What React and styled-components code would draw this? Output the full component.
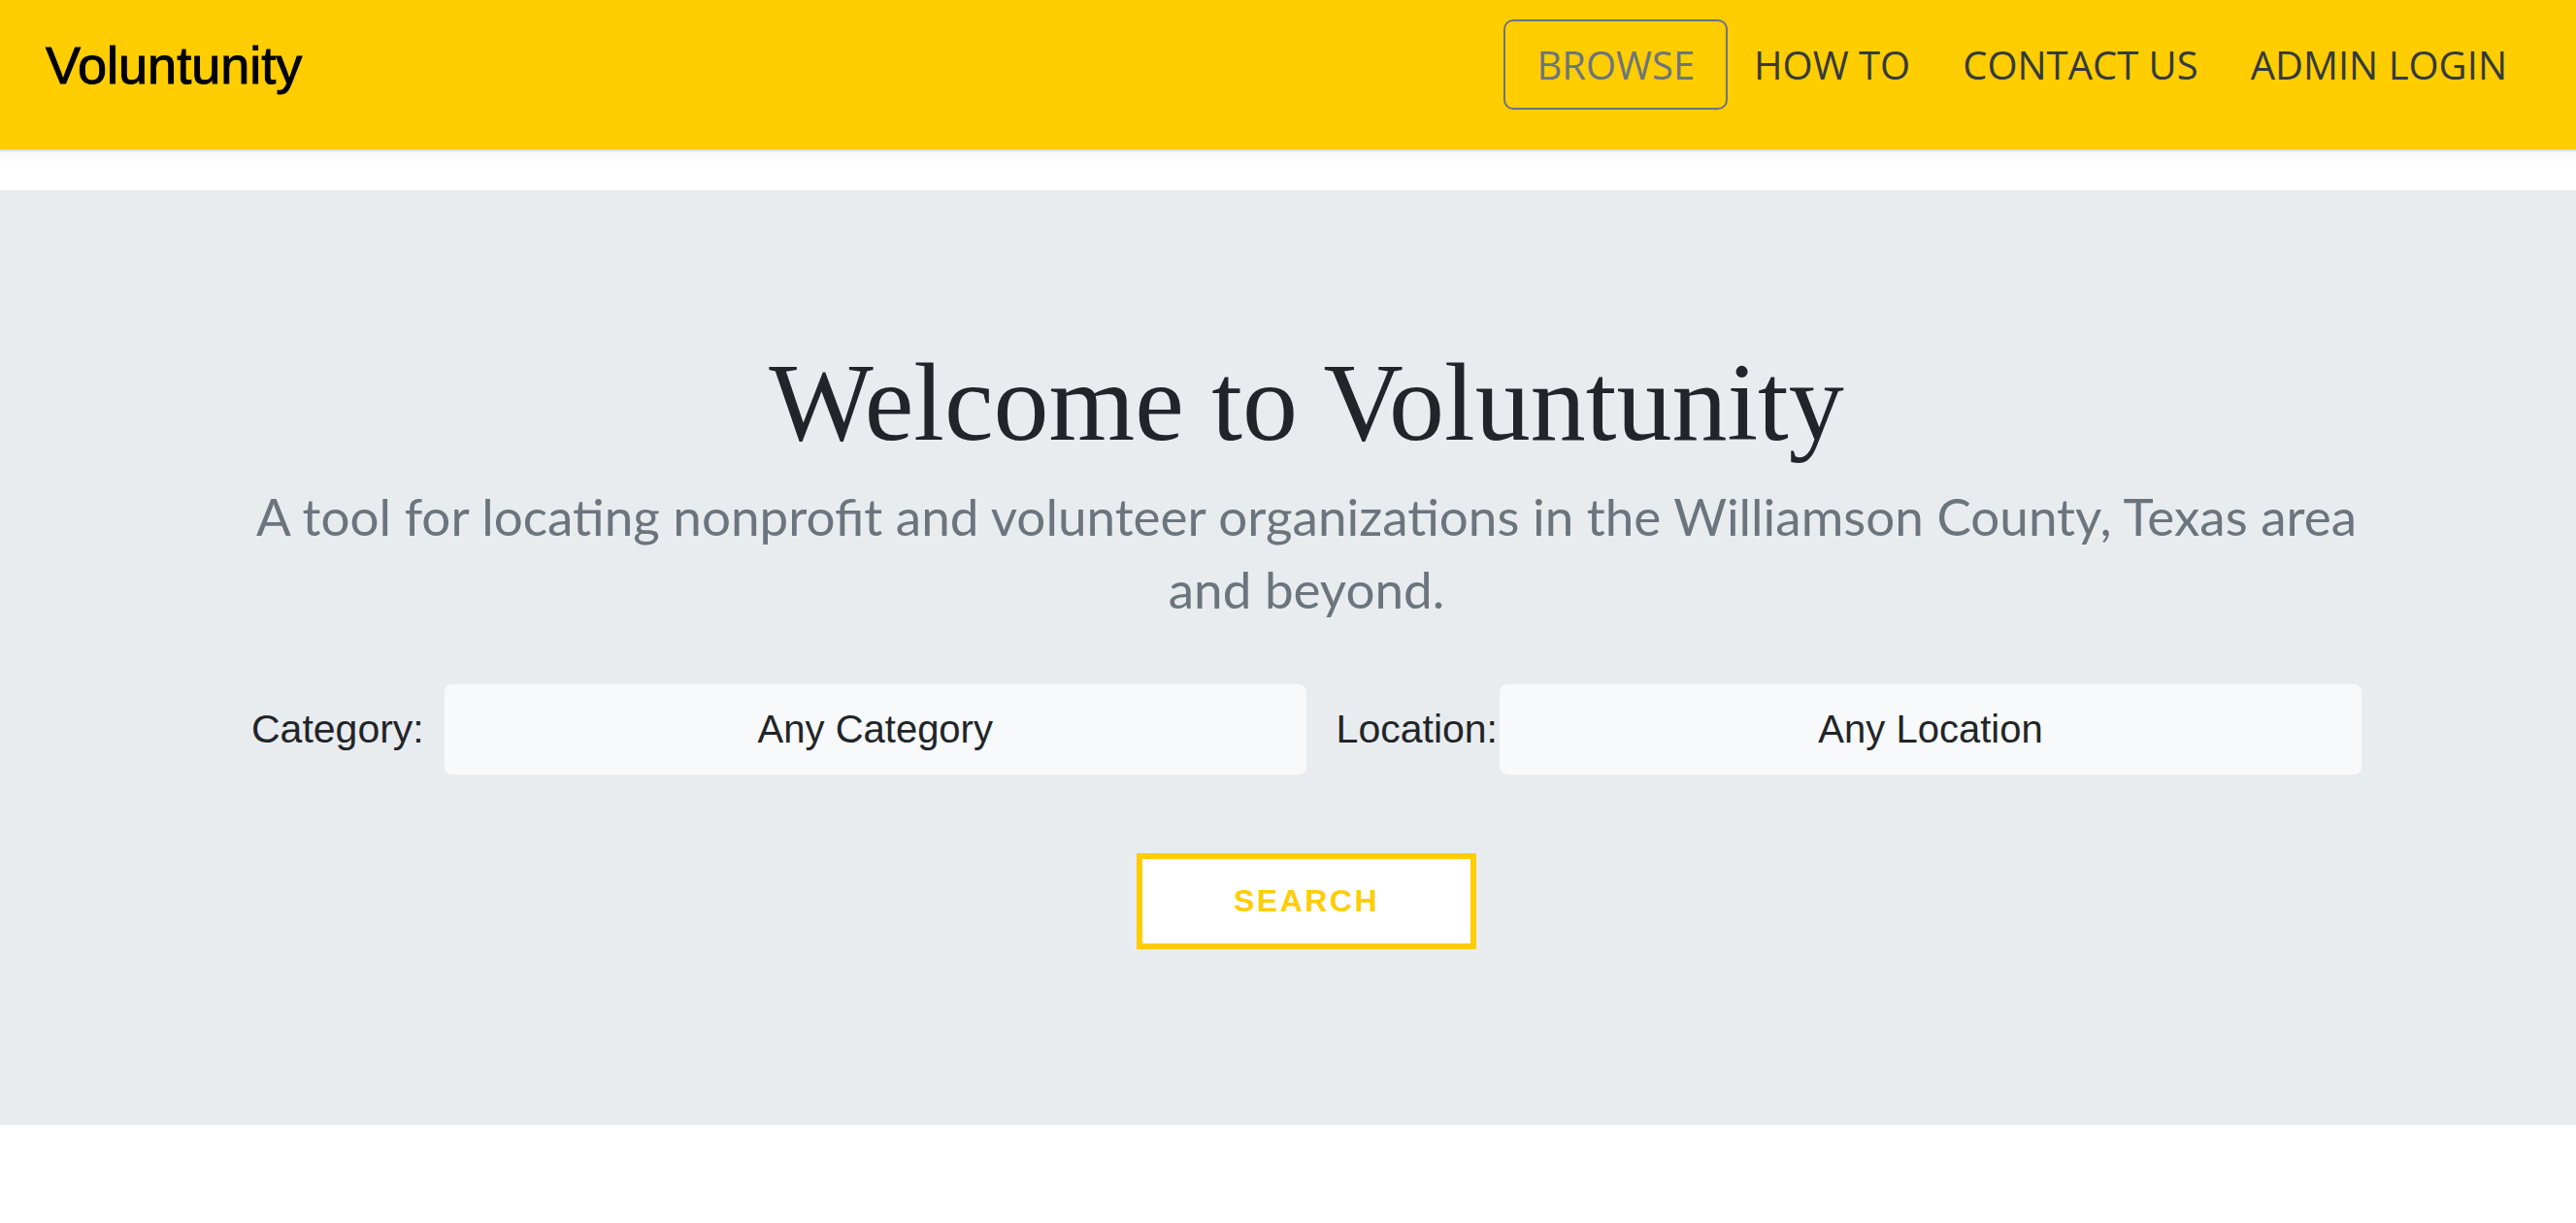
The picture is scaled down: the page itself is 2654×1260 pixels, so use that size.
import React from "react";
import styled, { createGlobalStyle } from "styled-components";

const GlobalStyle = createGlobalStyle`
  html, body {
    margin: 0;
    padding: 0;
    background: #ffffff;
  }
  * { box-sizing: border-box; }
`;

const Page = styled.div`
  width: 100%;
  min-height: 1260px;
  background: #ffffff;
`;

const Navbar = styled.nav`
  display: flex;
  align-items: center;
  justify-content: space-between;
  height: 156px;
  padding: 20px 44px 41px 47px;
  background: #ffcd00;
  border-bottom: 2px solid #dfe1e4;
  box-shadow: 0 4px 12px rgba(0, 0, 0, 0.05);
  position: relative;
  z-index: 1;
`;

const Brand = styled.a`
  font-family: "Liberation Sans", Arial, sans-serif;
  font-size: 54px;
  color: #000000;
  text-decoration: none;
  line-height: 1;
  -webkit-text-stroke: 1px #000;
`;

const NavList = styled.ul`
  display: flex;
  align-items: center;
  list-style: none;
  margin: 0;
  padding: 0;
  height: 93px;
`;

const NavLink = styled.a`
  display: flex;
  align-items: center;
  height: 93px;
  padding: ${(p) => (p.$active ? "0 32px" : "0 25px")};
  font-family: "Open Sans", sans-serif;
  font-size: 40px;
  font-weight: 400;
  color: ${(p) => (p.$active ? "#6c757d" : "#343a40")};
  text-decoration: none;
  border: ${(p) => (p.$active ? "2px solid #6c757d" : "2px solid transparent")};
  border-radius: 10px;
  white-space: nowrap;
`;

const Jumbotron = styled.section`
  margin-top: 40px;
  background: #e9ecef;
  height: 963px;
  padding: 151px 222px 0 260px;
  display: flex;
  flex-direction: column;
  align-items: center;
`;

const Title = styled.h1`
  margin: 0;
  font-family: "Liberation Serif", "Times New Roman", serif;
  font-weight: 400;
  font-size: 114px;
  line-height: 1.2;
  color: #212529;
  text-align: center;
`;

const Lead = styled.p`
  margin: 10px 0 0;
  font-family: Lato, "Open Sans", sans-serif;
  font-weight: 400;
  font-size: 53px;
  line-height: 75px;
  color: #6c757d;
  text-align: center;
  width: 100%;
`;

const FormRow = styled.div`
  display: flex;
  align-items: center;
  justify-content: space-between;
  width: calc(100% + 2px);
  margin-top: 61px;
`;

const Field = styled.div`
  display: flex;
  align-items: center;
`;

const Label = styled.label`
  font-family: "Liberation Sans", Arial, sans-serif;
  font-size: 41px;
  color: #212529;
  margin-right: ${(p) => p.$gap}px;
  white-space: nowrap;
`;

const Select = styled.select`
  appearance: none;
  -webkit-appearance: none;
  width: 888px;
  height: 93px;
  border: none;
  border-radius: 8px;
  background: #f8f9fa;
  font-family: "Liberation Sans", Arial, sans-serif;
  font-size: 40px;
  color: #212529;
  text-align: center;
  text-align-last: center;
  padding: 0 20px;
  outline: none;
`;

const SearchButton = styled.button`
  margin-top: 81px;
  width: 350px;
  height: 99px;
  background: #ffffff;
  border: 6px solid #ffcd00;
  border-radius: 0;
  color: #ffcd00;
  font-family: "Liberation Sans", Arial, sans-serif;
  font-weight: 700;
  font-size: 32px;
  letter-spacing: 2.5px;
  text-transform: uppercase;
  cursor: pointer;
`;

export default function App() {
  return (
    <Page>
      <GlobalStyle />
      <Navbar>
        <Brand href="#">Voluntunity</Brand>
        <NavList>
          <li><NavLink href="#" $active>BROWSE</NavLink></li>
          <li><NavLink href="#">HOW TO</NavLink></li>
          <li><NavLink href="#">CONTACT US</NavLink></li>
          <li><NavLink href="#">ADMIN LOGIN</NavLink></li>
        </NavList>
      </Navbar>
      <Jumbotron>
        <Title>Welcome to Voluntunity</Title>
        <Lead>
          A tool for locating nonprofit and volunteer organizations in the Williamson County, Texas area and beyond.
        </Lead>
        <FormRow>
          <Field>
            <Label $gap={21}>Category:</Label>
            <Select defaultValue="any">
              <option value="any">Any Category</option>
            </Select>
          </Field>
          <Field>
            <Label $gap={2}>Location:</Label>
            <Select defaultValue="any">
              <option value="any">Any Location</option>
            </Select>
          </Field>
        </FormRow>
        <SearchButton type="button">Search</SearchButton>
      </Jumbotron>
    </Page>
  );
}
